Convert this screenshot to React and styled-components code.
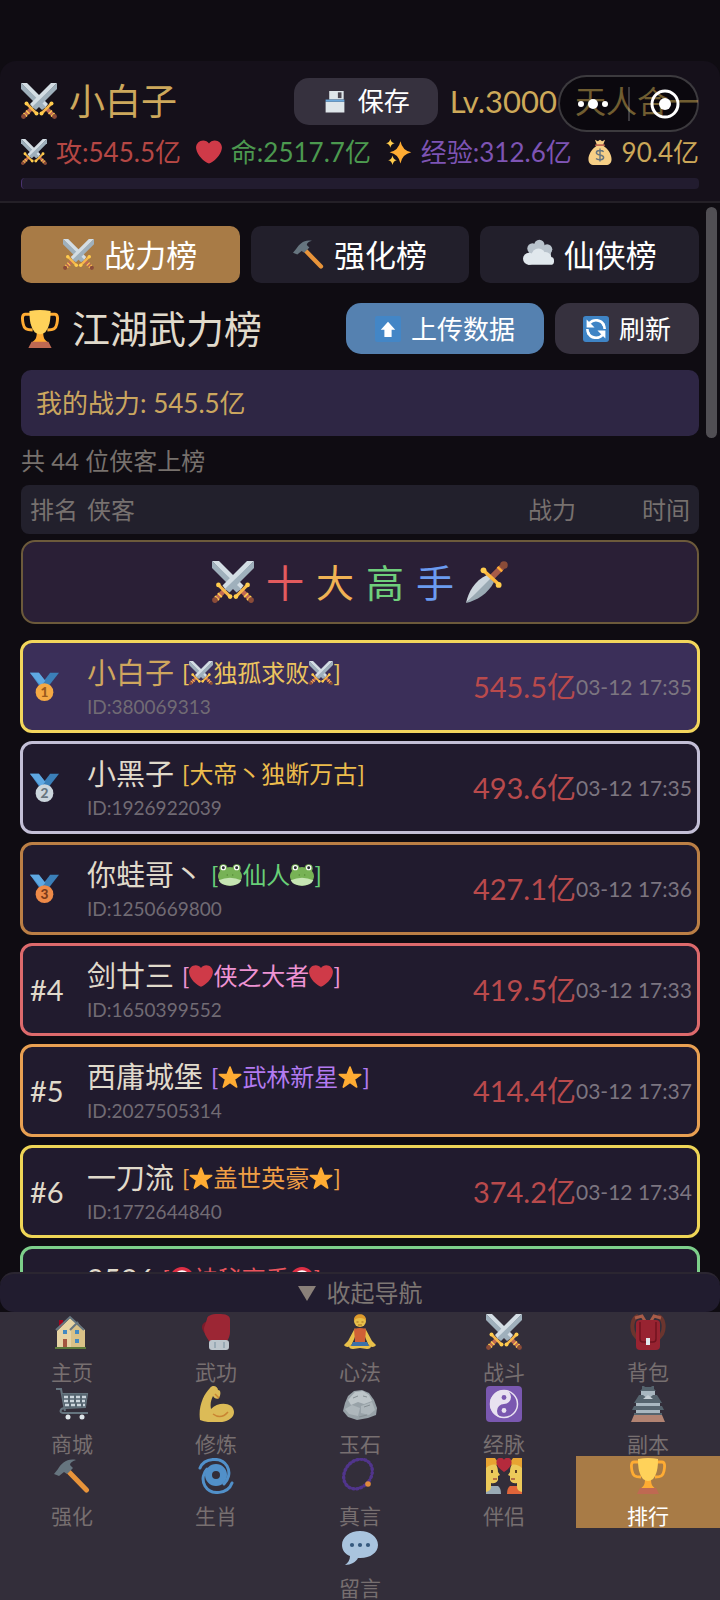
import React, { useState } from "react";
import styled, { createGlobalStyle } from "styled-components";

const GlobalStyle = createGlobalStyle`
  * { box-sizing: border-box; }
  body {
    margin: 0;
    background: #0f0c12;
    color: #e0dacb;
    font-family: Lato, "Noto Sans CJK SC", sans-serif;
  }
  button {
    font-family: inherit;
    border: 0;
    padding: 0;
    cursor: pointer;
  }
`;

/* ---------- icons ---------- */
const SWORD = (
  <>
    <path fill="#d3dde4" d="M0 0h6l21 21-3 4z" />
    <path fill="#9fb0bc" d="M0 0v6l21 21 4-3z" />
    <path stroke="#bf6952" strokeWidth="4" d="M25 25l8 8" />
    <path stroke="#ffcc4d" strokeWidth="1.4" d="M27.5 31l3.5-3.5M30 33.5l3.5-3.5" />
    <path stroke="#f7b84b" strokeWidth="2.6" strokeLinecap="round" d="M20.5 30.5l10-10" />
    <circle cx="20.5" cy="30.5" r="2" fill="#ffcc4d" />
    <circle cx="30.5" cy="20.5" r="2" fill="#ffcc4d" />
    <circle cx="33.5" cy="33.5" r="2.4" fill="#8a4b38" />
  </>
);

const medal = (n, fill, ink) => (
  <>
    <path fill="#4a96d2" d="M0 1h11l10 13-8 5z" />
    <path fill="#3b7fb8" d="M36 1H25L15 14l7 5z" />
    <path fill="#5fa8e2" d="M0 1h11l8 10-5 6z" />
    <circle cx="18" cy="25" r="11" fill={fill} />
    <text x="18" y="31" textAnchor="middle" fontSize="17" fontWeight="900" fill={ink}>
      {n}
    </text>
  </>
);

const ICONS = {
  swords: (
    <>
      {SWORD}
      <g transform="matrix(-1 0 0 1 36 0)">{SWORD}</g>
    </>
  ),
  heart: (
    <path
      fill="#cf3a48"
      d="M35.9 11.8c0-5.4-4.400-9.8-9.9-9.8-3.3 0-6.2 1.6-8 4.1C16.2 3.6 13.3 2 10 2 4.5 2 .1 6.4.1 11.8c0 .8.1 1.5.3 2.3C1.8 22.600 11.2 31.6 18 34c6.8-2.4 16.2-11.4 17.6-19.9.2-.8.3-1.500.3-2.3z"
    />
  ),
  sparkles: (
    <>
      <path fill="#ffac33" d="M20 3q2.500 12.500 15 15.500Q22.500 21 20 34q-2.500-13-15-15.500Q17.500 15.500 20 3z" />
      <path fill="#ffcc4d" d="M6 0q1 5 6 6-5 1-6 6-1-5-6-6 5-1 6-6zM9 23q1 5.500 6 6.500-5 1-6 6.500-1-5.500-6-6.500 5-1 6-6.500z" />
    </>
  ),
  bag: (
    <>
      <path fill="#f6cf86" d="M11 1l4 2 3-2 3 2 4-2-3 8c8 5 12 13 12 19 0 5-3 8-8 8H10c-5 0-8-3-8-8C2 22 6 14 14 9z" />
      <path stroke="#bf6952" strokeWidth="2.5" strokeLinecap="round" d="M12.5 8.5h11" />
      <path fill="none" stroke="#67757f" strokeWidth="2" d="M23 17.5c-2-2-10-2.5-10 1.5 0 4.5 10 2 10 6.5 0 4-8 4-10.5 1.5M18 13v18" />
    </>
  ),
  floppy: (
    <>
      <path fill="#dfe6ea" d="M10 4h20v12H10zM5 19h26v15H5z" />
      <path fill="#6da9dc" d="M5 16h26v3H5z" />
      <path fill="#4a4650" d="M22 6h5v8h-5z" />
    </>
  ),
  hammer: (
    <>
      <path stroke="#e8943a" strokeWidth="5" strokeLinecap="round" d="M15 14l17.5 18" />
      <path fill="#66757f" d="M0 16l4-5C7 6 13 0 22 2c-4 1-6 3-6 5l3 3-6 6-3-2-5 4z" />
    </>
  ),
  cloud: (
    <>
      <circle cx="19" cy="7" r="6" fill="#b9c3cc" />
      <circle cx="11" cy="11" r="6" fill="#b9c3cc" />
      <circle cx="28" cy="12" r="6" fill="#b9c3cc" />
      <path fill="#b9c3cc" d="M7 12h26l-1 9H8z" />
      <circle cx="18" cy="19" r="8" fill="#e1e8ed" />
      <circle cx="7" cy="23" r="7" fill="#e1e8ed" />
      <circle cx="26" cy="22" r="7" fill="#e1e8ed" />
      <rect x="4" y="21" width="32" height="9" rx="4" fill="#e1e8ed" />
    </>
  ),
  trophy: (
    <>
      <path
        fill="none"
        stroke="#ffac33"
        strokeWidth="2.8"
        d="M10 4H4C1 4 1 8 2 13c1 5 3 6 9 6M26 4h6c3 0 3 4 2 9-1 5-3 6-9 6"
      />
      <path fill="#ffac33" d="M15 20h6c0 7 1 8 5 11H10c4-3 5-4 5-11z" />
      <path fill="#ffd25a" d="M8 1q10-2 20 0c0 9-1 15-5 20q-5 4-10 0C9 16 8 10 8 1z" />
      <path fill="#bf6952" d="M10 30h16l3 6H7z" />
    </>
  ),
  upload: (
    <>
      <rect width="36" height="36" rx="3" fill="#4386c6" />
      <path fill="#fff" d="M18 8l10 11h-5v10H13V19H8z" />
    </>
  ),
  refresh: (
    <>
      <rect width="36" height="36" rx="4" fill="#3f84c5" />
      <path fill="none" stroke="#fff" strokeWidth="3.6" d="M29 13A12 12 0 0 0 9 10M7 23a12 12 0 0 0 20 3" />
      <path fill="#fff" d="M5 5v11h11zM31 31V20H20z" />
      <path fill="none" stroke="#fff" strokeWidth="3.6" d="M30 18c0-3-1-5-2-7M6 18c0 3 1 5 2 7" />
    </>
  ),
  dagger: (
    <>
      <path fill="#ccd6dd" d="M0 36C2 27 7 17 18 12l4 4z" />
      <path fill="#9aaab4" d="M0 36c9-2 19-8 24-18l-3-3z" />
      <path stroke="#a85c48" strokeWidth="5" d="M22 14l9-9" />
      <path stroke="#ffac33" strokeWidth="2" d="M27 5l4 4" />
      <path stroke="#ffb83d" strokeWidth="3" strokeLinecap="round" d="M15.5 8.500L28 20" />
      <circle cx="15" cy="8" r="2.5" fill="#ffcc4d" />
      <circle cx="28" cy="20.5" r="2.5" fill="#ffcc4d" />
      <circle cx="32.5" cy="3.5" r="3.3" fill="#8a4b38" />
    </>
  ),
  gold: medal(1, "#f5a944", "#9a5a1c"),
  silver: medal(2, "#ccd6dd", "#67757f"),
  bronze: medal(3, "#ee8a48", "#7d3a1a"),
  frog: (
    <>
      <circle cx="8" cy="8" r="6" fill="#77b255" />
      <circle cx="28" cy="8" r="6" fill="#77b255" />
      <ellipse cx="18" cy="20" rx="18" ry="14" fill="#77b255" />
      <path fill="#c6e5b3" d="M1 26q17-8 34 0-4 8-17 8T1 26z" />
      <circle cx="8" cy="7" r="4" fill="#fff" />
      <circle cx="28" cy="7" r="4" fill="#fff" />
      <circle cx="8" cy="7" r="2.2" fill="#292f33" />
      <circle cx="28" cy="7" r="2.2" fill="#292f33" />
      <path stroke="#5c913b" strokeWidth="2" d="M13 18h2M21 18h2" />
    </>
  ),
  star: (
    <path
      fill="#ffac33"
      stroke="#ffac33"
      strokeWidth="2.5"
      strokeLinejoin="round"
      d="M18 3l4.3 11.5H34l-9.5 7L28 33l-10-7-10 7 3.5-11.5-9.5-7h11.7z"
    />
  ),
  target: (
    <>
      <circle cx="18" cy="18" r="18" fill="#dd2e44" />
      <circle cx="18" cy="18" r="13" fill="#fff" />
      <circle cx="18" cy="18" r="9" fill="#dd2e44" />
      <circle cx="18" cy="18" r="4" fill="#fff" />
    </>
  ),
  house: (
    <>
      <path fill="#a0041e" d="M5 6h4v7H5z" />
      <path fill="#e6d3a3" d="M3 17L16 4l15 12v17H3z" />
      <path fill="#d9c187" d="M17 16l7-7 7 8v16H17z" />
      <path fill="none" stroke="#66757f" strokeWidth="2" d="M2 16L16 3l14 13M16 16l8-8" />
      <path fill="#4289c1" d="M9 16h4v4H9zM21 16h4v4h-4zM21 25h4v4h-4z" />
      <path fill="#a5563f" d="M9 25h4v8H9z" />
      <path fill="#5c7a3b" d="M1 33h31v2H1z" />
    </>
  ),
  glove: (
    <>
      <path fill="#7c1c2b" d="M4 13c0-4 4-6 7-5v14C7 20 4 17 4 13z" />
      <path fill="#9c2634" d="M9 5c0-3 4-5 11-5 8 0 12 1 12 6v12c0 4-2 8-3 9H11C8 22 6 20 6 14z" />
      <rect x="11" y="26" width="20" height="10" rx="3" fill="#bcc5cc" />
      <path stroke="#99aab5" strokeWidth="2" d="M17 28v6M26 28v6" />
    </>
  ),
  yoga: (
    <>
      <path fill="#e8c04a" d="M13 14L6 27l-4 4c3 4 7 1 8-1l5-12zM23 14l7 13 4 4c-3 4-7 1-8-1l-5-12z" />
      <path fill="#e8c04a" d="M7 32q11-4 22 0 0 3-4 3l-7-1-7 1q-4 0-4-3z" />
      <path fill="#3b70a8" d="M11 28h14l2 4H9z" />
      <path fill="#cf6036" d="M12 15q6-2 12 0l-1 13H13z" />
      <circle cx="18" cy="7" r="6" fill="#e8c04a" />
      <path fill="#dd9a2c" d="M12 7c-1-9 13-9 12 0-1-4-11-4-12 0z" />
      <path stroke="#a36f22" d="M14.5 8h2M19.5 8h2M16 11h4" />
    </>
  ),
  backpack: (
    <>
      <path fill="none" stroke="#6b352e" strokeWidth="4" d="M8 2C2 4 1 14 4 20l4 5M28 2c6 2 7 12 4 18l-4 5" />
      <path stroke="#a85c48" strokeWidth="3" d="M5 4l7-2 3 5M31 4l-7-2-3 5" fill="none" />
      <rect x="6" y="6" width="24" height="30" rx="4" fill="#982331" />
      <path fill="none" stroke="#71131f" strokeWidth="1.5" d="M10 8v17q0 3 3 3h10q3 0 3-3V8" />
      <path fill="#e1e8ed" d="M16 24h4v7h-4z" />
    </>
  ),
  cart: (
    <>
      <path fill="none" stroke="#66757f" strokeWidth="2" d="M2 3h5l4 22M34 27H9c-4 0-3-5 2-5l20-1 2-13H8" />
      <path fill="#566570" d="M8 8h25l-2 13-20 1z" />
      <path fill="none" stroke="#ccd6dd" strokeWidth="2.5" strokeDasharray="4 2" d="M10 11h22M10 15h21M11 19h20" />
      <circle cx="14" cy="31" r="2.5" fill="#dfe6ea" />
      <circle cx="28" cy="31" r="2.5" fill="#dfe6ea" />
    </>
  ),
  muscle: (
    <>
      <path
        fill="#dcbb57"
        d="M2 34C0 20 6 8 12 2c3-4 8-1 8 2 3 0 3 4 1 8-2 2-5 0-6-2-2 4-3 8-2 13 7-8 23-7 23 3 0 11-20 13-34 8z"
      />
      <path fill="none" stroke="#c98432" strokeWidth="1.5" d="M15 28q8 6 15-2M17 8l4 4" />
    </>
  ),
  rock: (
    <>
      <path fill="#98a2a8" d="M1 25l2-8 3-7 6-5 8-1 7 3 5 7 3 8-1 7-8 3-11 2-9-3z" />
      <path fill="#bdc5c9" d="M6 14l7-8 8-1 6 4 3 6-8 3-6-2-7 3z" />
      <path fill="#aeb7bc" d="M3 23l7-4 8 3-2 8-9-2zM19 20l11-4 3 8-6 5-8-2z" />
      <path stroke="#868f94" fill="none" d="M11 12l5-2M21 10l4 1M22 21l6-2M17 31l8-2" />
    </>
  ),
  yinyang: (
    <>
      <rect width="36" height="36" rx="4" fill="#7a58b0" />
      <circle cx="18" cy="18" r="13.5" fill="none" stroke="#e8e2f0" strokeWidth="1.5" />
      <path fill="#e8e2f0" d="M18 4a14 14 0 0 0 0 28 7 7 0 0 1 0-14 7 7 0 0 0 0-14z" />
      <circle cx="18" cy="11.5" r="2.4" fill="#7a58b0" />
      <circle cx="18" cy="24.5" r="2.4" fill="#e8e2f0" />
    </>
  ),
  castle: (
    <>
      <path fill="#b28372" d="M4 29h28l3 7H1z" />
      <path fill="#a9b7c0" d="M6 17h24v11H6zM11 5h14v12H11z" />
      <path fill="#56646e" d="M12 0v3l-2 2h16l-2-2V0h-2l-1 1h-6l-1-1zM9 9l-5 8h28l-5-8h-4l-5 4-5-4zM4 20l-2 4h32l-2-4zM4 27h28v2H4z" />
      <path fill="#c5ced4" d="M18 9l5 4H13z" />
    </>
  ),
  cyclone: (
    <g fill="none" stroke="#5190c9" strokeLinecap="round">
      <circle cx="18" cy="17" r="7.5" strokeWidth="7" />
      <path strokeWidth="3" d="M2 10C6 0 23-2 29 8c4 7 1 14-3 18M34 25C30 36 13 38 7 28 3 21 6 14 9 11" />
    </g>
  ),
  beads: (
    <>
      <ellipse
        cx="16"
        cy="16"
        rx="13"
        ry="16"
        transform="rotate(40 16 16)"
        fill="none"
        stroke="#51358c"
        strokeWidth="3.4"
        strokeLinecap="round"
        strokeDasharray="1 3"
      />
      <ellipse cx="16" cy="16" rx="13" ry="16" transform="rotate(40 16 16)" fill="none" stroke="#51358c" strokeWidth="1.5" />
      <circle cx="26" cy="26" r="2.8" fill="#e08a3c" />
    </>
  ),
  couple: (
    <>
      <path fill="#99aab5" d="M0 36v-8h12q3 2 3 8z" />
      <path fill="#e0653a" d="M36 36v-8H24q-3 2-3 8z" />
      <path fill="#ecca5a" d="M0 4c7-3 12 2 12 10l2 3-2 1v4q-2 4-7 3v4q0 4-5 5zM36 4c-7-3-12 2-12 10l-2 3 2 1v4q2 4 7 3v4q0 4 5 5z" />
      <path fill="#e8a432" d="M0 0h9q3 3 3 7Q5 5 0 10zM36 0h-9q-3 3-3 7 7-2 12 3z" />
      <path fill="#b52a3c" d="M18 14C12 10 9 6 11 2c1-3 6-3 7 0 1-3 6-3 7 0 2 4-1 8-7 12z" />
      <path fill="#5b4023" d="M5 12h2v3H5zM29 12h2v3h-2z" />
      <path stroke="#a5563f" strokeWidth="1.5" d="M7 21h4M25 21h4" />
    </>
  ),
  speech: (
    <>
      <path fill="#a9c4de" d="M18 1C8 1 0 7 0 15c0 5 3 9 8 11 0 4-2 7-5 9 6 0 11-3 13-7 11 1 20-5 20-13S28 1 18 1z" />
      <circle cx="10" cy="15" r="2.1" fill="#35597e" />
      <circle cx="18" cy="15" r="2.1" fill="#35597e" />
      <circle cx="26" cy="15" r="2.1" fill="#35597e" />
    </>
  ),
};

const Glyph = styled.svg`
  width: 1em;
  height: 1em;
  flex: none;
  display: block;
`;

const Icon = ({ name }) => (
  <Glyph viewBox="0 0 36 36" aria-hidden="true">
    {ICONS[name]}
  </Glyph>
);

/* ---------- data ---------- */
const STATS = [
  { icon: "swords", text: "攻:545.5亿", color: "#b54744" },
  { icon: "heart", text: "命:2517.7亿", color: "#4c994f" },
  { icon: "sparkles", text: "经验:312.6亿", color: "#7e54b4" },
  { icon: "bag", text: "90.4亿", color: "#cba758" },
];

const TABS = [
  { icon: "swords", label: "战力榜" },
  { icon: "hammer", label: "强化榜" },
  { icon: "cloud", label: "仙侠榜" },
];

const PLAYERS = [
  { medal: "gold", name: "小白子", deco: "swords", title: "独孤求败", color: "#ecc45e", id: "380069313", power: "545.5亿", time: "03-12 17:35", line: "#f3d65c", me: true },
  { medal: "silver", name: "小黑子", title: "大帝丶独断万古", color: "#ecbc4c", id: "1926922039", power: "493.6亿", time: "03-12 17:35", line: "#c3bfd6" },
  { medal: "bronze", name: "你蛙哥丶", deco: "frog", title: "仙人", color: "#68cf78", id: "1250669800", power: "427.1亿", time: "03-12 17:36", line: "#bb7f45" },
  { rank: "#4", name: "剑廿三", deco: "heart", title: "侠之大者", color: "#ee93d3", id: "1650399552", power: "419.5亿", time: "03-12 17:33", line: "#dd6a6c" },
  { rank: "#5", name: "西庸城堡", deco: "star", title: "武林新星", color: "#b27af0", id: "2027505314", power: "414.4亿", time: "03-12 17:37", line: "#e8a052" },
  { rank: "#6", name: "一刀流", deco: "star", title: "盖世英豪", color: "#ef9f45", id: "1772644840", power: "374.2亿", time: "03-12 17:34", line: "#eed556" },
  { rank: "#7", name: "9526", deco: "target", title: "神秘高手", color: "#e8545c", id: "1538820417", power: "361.8亿", time: "03-12 17:35", line: "#7dcf8a" },
];

const NAV = [
  ["house", "主页"],
  ["glove", "武功"],
  ["yoga", "心法"],
  ["swords", "战斗"],
  ["backpack", "背包"],
  ["cart", "商城"],
  ["muscle", "修炼"],
  ["rock", "玉石"],
  ["yinyang", "经脉"],
  ["castle", "副本"],
  ["hammer", "强化"],
  ["cyclone", "生肖"],
  ["beads", "真言"],
  ["couple", "伴侣"],
  ["trophy", "排行"],
  ["speech", "留言"],
];

/* ---------- styles ---------- */
const Page = styled.div`
  height: 100vh;
  display: flex;
  flex-direction: column;
  padding-top: 61px;
  position: relative;
  overflow: hidden;
`;

const Header = styled.header`
  padding: 16px 21px 12px;
  background: #15101a;
  border-bottom: 2px solid #242027;
  border-radius: 16px 16px 0 0;
`;

const HeaderRow = styled.div`
  display: flex;
  align-items: center;
  height: 48px;
  gap: 12px;
`;

const Player = styled.div`
  display: flex;
  align-items: center;
  gap: 12px;
  margin-right: auto;
  font-size: 36px;
  line-height: 48px;
  color: #cda85c;
`;

const Level = styled.div`
  display: flex;
  gap: 18px;
  font-size: 31px;
  line-height: 48px;
  color: #cda959;
  white-space: nowrap;
`;

const Button = styled.button`
  display: flex;
  align-items: center;
  justify-content: center;
  gap: 10px;
  height: ${(p) => (p.$small ? 47 : 51)}px;
  padding: 0 ${(p) => (p.$primary ? 29 : 28)}px;
  border-radius: 15px;
  background: ${(p) => (p.$primary ? "#5581b0" : "#36313e")};
  color: #fff;
  font-size: 26px;
  line-height: 36px;
`;

const Stats = styled.div`
  display: flex;
  justify-content: space-between;
  margin-top: 9px;
`;

const Stat = styled.div`
  display: flex;
  align-items: center;
  gap: 9px;
  font-size: 26px;
  line-height: 36px;
  color: ${(p) => p.$color};
  white-space: nowrap;
`;

const Progress = styled.div`
  height: 11px;
  margin-top: 8px;
  border-radius: 4px;
  border-left: 1px solid #4b3470;
  background: #221c2f;
`;

const Capsule = styled.div`
  position: absolute;
  top: 75px;
  right: 21px;
  width: 141px;
  height: 57px;
  border: 2px solid rgba(255, 255, 255, 0.2);
  border-radius: 29px;
  background: rgba(0, 0, 0, 0.45);
  display: flex;
  align-items: center;
  justify-content: center;
  gap: 18px;
`;

const CapsuleButton = styled.button`
  display: block;
  background: none;
  width: 34px;
  height: 34px;

  svg {
    display: block;
  }
`;

const CapsuleLine = styled.span`
  width: 2px;
  height: 34px;
  background: rgba(255, 255, 255, 0.2);
`;

const Content = styled.main`
  flex: 1;
  min-height: 0;
  position: relative;
  overflow: hidden;
  padding: 23px 21px 0;
`;

const ScrollThumb = styled.div`
  position: absolute;
  top: 4px;
  right: 3px;
  width: 11px;
  height: 231px;
  border-radius: 6px;
  background: #514f54;
`;

const Tabs = styled.div`
  display: grid;
  grid-template-columns: repeat(3, 1fr);
  gap: 11px;
`;

const Tab = styled.button`
  display: flex;
  align-items: center;
  justify-content: center;
  gap: 10px;
  height: 57px;
  border-radius: 10px;
  background: ${(p) => (p.$active ? "#a87b46" : "#221f2b")};
  color: #fff;
  font-size: 31px;
  line-height: 40px;
`;

const TitleRow = styled.div`
  display: flex;
  align-items: center;
  gap: 11px;
  margin-top: 20px;
`;

const Title = styled.h1`
  display: flex;
  align-items: center;
  gap: 13px;
  margin: 0 auto 0 0;
  font-size: 38px;
  font-weight: 400;
  line-height: 51px;
  color: #e0dacb;
`;

const MyPower = styled.div`
  margin-top: 16px;
  padding: 15px;
  border-radius: 10px;
  background: #2e2644;
  color: #cba65f;
  font-size: 26px;
  line-height: 36px;
`;

const Count = styled.div`
  padding: 8px 0;
  color: #77716d;
  font-size: 24px;
  line-height: 33px;
`;

const Board = styled.table`
  display: block;

  thead,
  tbody {
    display: block;
  }
  th,
  td {
    padding: 0;
    font-weight: 400;
    text-align: left;
    line-height: 36px;
  }
`;

const HeadRow = styled.tr`
  display: grid;
  grid-template-columns: 57px 1fr auto 114px;
  align-items: center;
  height: 49px;
  padding: 0 9px;
  border-radius: 8px;
  background: #22202c;
  color: #77716f;
  font-size: 24px;

  && th:nth-child(n + 3) {
    text-align: right;
  }
`;

const BannerRow = styled.tr`
  display: block;
  margin: 6px 0 16px;
`;

const Banner = styled.td`
  display: flex;
  align-items: center;
  justify-content: center;
  gap: 12px;
  height: 84px;
  border: 2px solid #6c5a3b;
  border-radius: 14px;
  background: #2a1f36;
  font-size: 42px;
`;

const BannerChar = styled.span`
  color: ${(p) => p.$color};
  font-size: 38px;
`;

const PlayerRow = styled.tr`
  display: grid;
  grid-template-columns: 57px 1fr auto 114px;
  align-items: center;
  height: 93px;
  margin: 0 -1px 8px;
  padding: 0 7px;
  border: 3px solid ${(p) => p.$line};
  border-radius: 12px;
  background: ${(p) => (p.$me ? "#3b2f59" : "#211b2e")};
`;

const Rank = styled.td`
  font-size: 29px;
  color: #e0dacb;
`;

const Info = styled.td`
  && {
    padding-top: 3px;
  }
`;

const NameLine = styled.div`
  display: flex;
  align-items: center;
  gap: 8px;
  font-size: 29px;
  line-height: 38px;
  color: ${(p) => (p.$me ? "#cfa65e" : "#e0dacb")};
  white-space: nowrap;
`;

const Tag = styled.span`
  display: flex;
  align-items: center;
  font-size: 24px;
  color: ${(p) => p.$color};
`;

const PlayerId = styled.div`
  font-size: 19px;
  line-height: 30px;
  color: #716b74;
`;

const Power = styled.td`
  font-size: 29px;
  color: #b94a4c;
`;

const Time = styled.td`
  && {
    text-align: right;
  }
  font-size: 21px;
  color: #7c7580;
  white-space: nowrap;
`;

const Toggle = styled.button`
  display: flex;
  align-items: center;
  justify-content: center;
  gap: 11px;
  width: 100%;
  height: 40px;
  border-top: 2px solid #2b2631;
  border-radius: 14px;
  background: #211c2f;
  color: #7d7673;
  font-size: 24px;
  line-height: 34px;
`;

const Triangle = styled.span`
  border: 9px solid transparent;
  border-top: 15px solid #8a8079;
  border-bottom: 0;
`;

const Nav = styled.nav`
  display: flex;
  flex-wrap: wrap;
  justify-content: center;
  background: #332e3a;
`;

const NavItem = styled.button`
  display: flex;
  flex-direction: column;
  align-items: center;
  width: 20%;
  height: 72px;
  padding-top: 2px;
  background: ${(p) => (p.$active ? "#a87b46" : "transparent")};
  color: ${(p) => (p.$active ? "#fff" : "#776f70")};
  font-size: 36px;
`;

const NavLabel = styled.span`
  margin-top: 8px;
  font-size: 21px;
  line-height: 28px;
`;

/* ---------- page ---------- */
const App = () => {
  const [tab, setTab] = useState("战力榜");
  const [page, setPage] = useState("排行");
  const [open, setOpen] = useState(true);

  return (
    <Page>
      <GlobalStyle />
      <Header>
        <HeaderRow>
          <Player>
            <Icon name="swords" />
            小白子
          </Player>
          <Button type="button" $small>
            <Icon name="floppy" />
            保存
          </Button>
          <Level>
            <span>Lv.3000</span>
            <span>天人合一</span>
          </Level>
        </HeaderRow>
        <Stats>
          {STATS.map((s) => (
            <Stat key={s.icon} $color={s.color}>
              <Icon name={s.icon} />
              {s.text}
            </Stat>
          ))}
        </Stats>
        <Progress />
      </Header>

      <Content>
        <Tabs>
          {TABS.map((t) => (
            <Tab key={t.label} type="button" $active={t.label === tab} onClick={() => setTab(t.label)}>
              <Icon name={t.icon} />
              {t.label}
            </Tab>
          ))}
        </Tabs>
        <TitleRow>
          <Title>
            <Icon name="trophy" />
            江湖武力榜
          </Title>
          <Button type="button" $primary>
            <Icon name="upload" />
            上传数据
          </Button>
          <Button type="button">
            <Icon name="refresh" />
            刷新
          </Button>
        </TitleRow>
        <MyPower>我的战力: 545.5亿</MyPower>
        <Count>共 44 位侠客上榜</Count>

        <Board>
          <thead>
            <HeadRow>
              <th>排名</th>
              <th>侠客</th>
              <th>战力</th>
              <th>时间</th>
            </HeadRow>
          </thead>
          <tbody>
            <BannerRow>
              <Banner colSpan={4}>
                <Icon name="swords" />
                <BannerChar $color="#e35b5e">十</BannerChar>
                <BannerChar $color="#f0b254">大</BannerChar>
                <BannerChar $color="#6fcf7c">高</BannerChar>
                <BannerChar $color="#6b9bf0">手</BannerChar>
                <Icon name="dagger" />
              </Banner>
            </BannerRow>
            {PLAYERS.map((p) => (
              <PlayerRow key={p.id} $line={p.line} $me={p.me}>
                <Rank>{p.medal ? <Icon name={p.medal} /> : p.rank}</Rank>
                <Info>
                  <NameLine $me={p.me}>
                    {p.name}
                    <Tag $color={p.color}>
                      [{p.deco && <Icon name={p.deco} />}
                      {p.title}
                      {p.deco && <Icon name={p.deco} />}]
                    </Tag>
                  </NameLine>
                  <PlayerId>ID:{p.id}</PlayerId>
                </Info>
                <Power>{p.power}</Power>
                <Time>{p.time}</Time>
              </PlayerRow>
            ))}
          </tbody>
        </Board>
        <ScrollThumb />
      </Content>

      <Toggle type="button" onClick={() => setOpen(!open)}>
        <Triangle />
        收起导航
      </Toggle>
      {open && (
        <Nav>
          {NAV.map(([icon, label]) => (
            <NavItem key={label} type="button" $active={label === page} onClick={() => setPage(label)}>
              <Icon name={icon} />
              <NavLabel>{label}</NavLabel>
            </NavItem>
          ))}
        </Nav>
      )}

      <Capsule>
        <CapsuleButton type="button" aria-label="更多">
          <svg width="34" height="34" viewBox="0 0 34 34" fill="#fff">
            <circle cx="5" cy="17" r="3" />
            <circle cx="17" cy="17" r="5" />
            <circle cx="29" cy="17" r="3" />
          </svg>
        </CapsuleButton>
        <CapsuleLine />
        <CapsuleButton type="button" aria-label="关闭">
          <svg width="34" height="34" viewBox="0 0 34 34" fill="#fff">
            <circle cx="17" cy="17" r="13" fill="none" stroke="#fff" strokeWidth="3" />
            <circle cx="17" cy="17" r="6" />
          </svg>
        </CapsuleButton>
      </Capsule>
    </Page>
  );
};

export default App;
